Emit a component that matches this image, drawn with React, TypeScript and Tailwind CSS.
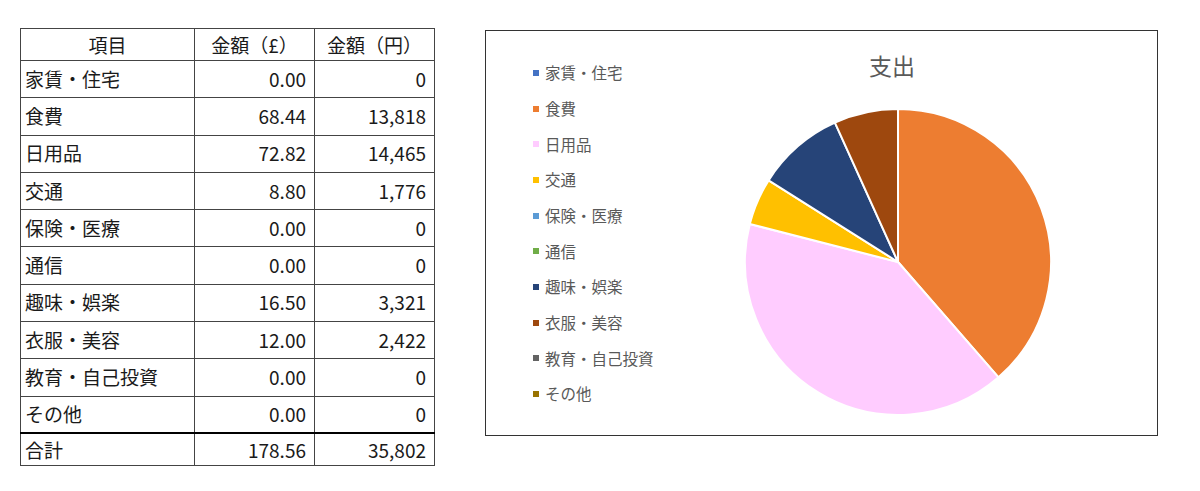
const rows = [
  { name: '家賃・住宅', gbp: '0.00', jpy: '0' },
  { name: '食費', gbp: '68.44', jpy: '13,818' },
  { name: '日用品', gbp: '72.82', jpy: '14,465' },
  { name: '交通', gbp: '8.80', jpy: '1,776' },
  { name: '保険・医療', gbp: '0.00', jpy: '0' },
  { name: '通信', gbp: '0.00', jpy: '0' },
  { name: '趣味・娯楽', gbp: '16.50', jpy: '3,321' },
  { name: '衣服・美容', gbp: '12.00', jpy: '2,422' },
  { name: '教育・自己投資', gbp: '0.00', jpy: '0' },
  { name: 'その他', gbp: '0.00', jpy: '0' },
]

const series = [
  { name: '家賃・住宅', value: 0, color: '#4472C4' },
  { name: '食費', value: 13818, color: '#ED7D31' },
  { name: '日用品', value: 14465, color: '#FFCCFF' },
  { name: '交通', value: 1776, color: '#FFC000' },
  { name: '保険・医療', value: 0, color: '#5B9BD5' },
  { name: '通信', value: 0, color: '#70AD47' },
  { name: '趣味・娯楽', value: 3321, color: '#264478' },
  { name: '衣服・美容', value: 2422, color: '#9E480E' },
  { name: '教育・自己投資', value: 0, color: '#636363' },
  { name: 'その他', value: 0, color: '#997300' },
]

const font = { fontFamily: '"Noto Sans CJK JP", "Noto Sans", sans-serif' }

function Pie() {
  const cx = 155
  const cy = 155
  const r = 153
  const total = series.reduce((s, d) => s + d.value, 0)
  let acc = 0
  const slices = series
    .filter((d) => d.value > 0)
    .map((d) => {
      const a0 = (acc / total) * Math.PI * 2
      acc += d.value
      const a1 = (acc / total) * Math.PI * 2
      const x0 = cx + r * Math.sin(a0)
      const y0 = cy - r * Math.cos(a0)
      const x1 = cx + r * Math.sin(a1)
      const y1 = cy - r * Math.cos(a1)
      const large = a1 - a0 > Math.PI ? 1 : 0
      return (
        <path
          key={d.name}
          d={`M${cx},${cy} L${x0},${y0} A${r},${r} 0 ${large} 1 ${x1},${y1} Z`}
          fill={d.color}
          stroke="#fff"
          strokeWidth={2}
          strokeLinejoin="round"
        />
      )
    })
  return (
    <svg width={310} height={310} viewBox="0 0 310 310">
      {slices}
    </svg>
  )
}

export default function App() {
  return (
    <div className="w-[1200px] h-[491px] bg-white flex items-start pl-[20px] pt-[28px] gap-[50px]" style={font}>
      <table className="border-collapse border-[1.5px] border-black text-[19px] text-[#1a1a1a] leading-none">
        <thead>
          <tr className="h-[32px]">
            <th className="w-[174px] border border-[#444] font-normal text-center">項目</th>
            <th className="w-[120px] border border-[#444] font-normal text-center">金額（£）</th>
            <th className="w-[120px] border border-[#444] font-normal text-center">金額（円）</th>
          </tr>
        </thead>
        <tbody>
          {rows.map((r) => (
            <tr key={r.name} className="h-[37.3px]">
              <td className="border border-[#444] pl-[4px] pb-[2px] text-left">{r.name}</td>
              <td className="border border-[#444] pr-[8px] pb-[2px] text-right">{r.gbp}</td>
              <td className="border border-[#444] pr-[8px] pb-[2px] text-right">{r.jpy}</td>
            </tr>
          ))}
          <tr className="h-[32px]">
            <td className="border border-[#444] border-t-2 border-t-black pl-[4px] text-left">合計</td>
            <td className="border border-[#444] border-t-2 border-t-black pr-[8px] text-right">178.56</td>
            <td className="border border-[#444] border-t-2 border-t-black pr-[8px] text-right">35,802</td>
          </tr>
        </tbody>
      </table>

      <div className="mt-[2px] w-[673px] h-[406px] border-[1.5px] border-[#333] flex">
        <div className="w-[257px] pl-[47px] pt-[24px] flex flex-col">
          {series.map((d) => (
            <div key={d.name} className="h-[35.7px] flex items-center gap-[6px] text-[15.5px] text-[#595959]">
              <span className="w-[6px] h-[6px] shrink-0" style={{ backgroundColor: d.color }} />
              <span>{d.name}</span>
            </div>
          ))}
        </div>
        <div className="w-[310px] flex flex-col items-center">
          <div className="pt-[19px] text-[23px] leading-[30px] text-[#595959] -ml-[12px]">支出</div>
          <div className="mt-[27px]">
            <Pie />
          </div>
        </div>
      </div>
    </div>
  )
}
